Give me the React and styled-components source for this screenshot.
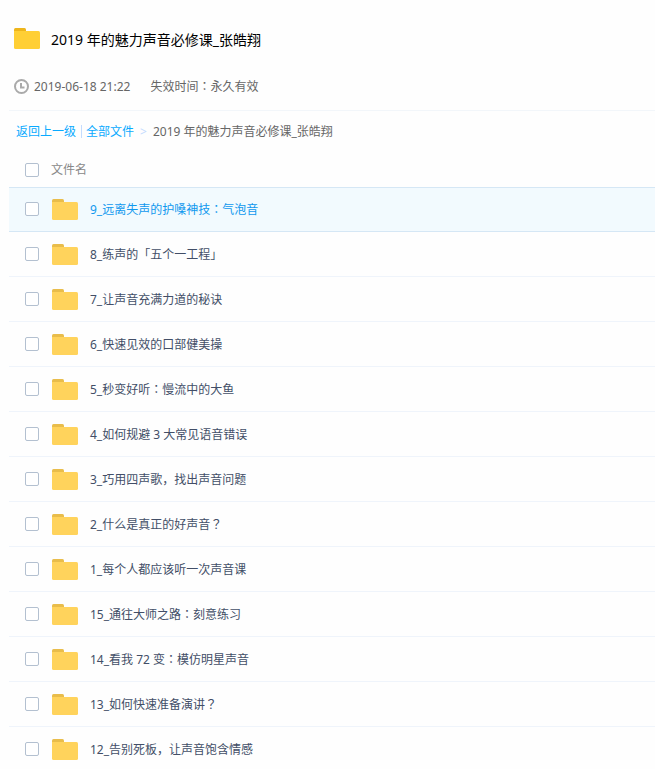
import React, { useState } from "react";
import styled, { createGlobalStyle, css } from "styled-components";

const GlobalStyle = createGlobalStyle`
  *, *::before, *::after { box-sizing: border-box; }
  body {
    margin: 0;
    background: #fefefe;
    color: #424e67;
    font: 12px/20px "Noto Sans", "Noto Sans CJK SC", sans-serif;
  }
`;

const Page = styled.main`
  padding-left: 9px;
  overflow: hidden;
`;

const Header = styled.header`
  padding: 28px 5px 14px;
  border-bottom: 1px solid #f2f6fa;
`;

const TitleRow = styled.div`
  display: flex;
  align-items: flex-start;
  gap: 11px;
  height: 21px;
`;

const Title = styled.h1`
  margin: 0;
  color: #000;
  font-size: 14px;
  line-height: 24px;
  font-weight: 400;
`;

const Meta = styled.div`
  display: flex;
  align-items: center;
  margin-top: 28px;
  line-height: 19px;
  color: #666;

  time { margin: 0 20px 0 5px; }
`;

const Breadcrumb = styled.nav`
  display: flex;
  align-items: center;
  height: 41px;
  padding-left: 7px;
  color: #666;
`;

const Crumb = styled.a`
  color: #09aaff;
  text-decoration: none;
`;

const Divider = styled.span`
  width: 1px;
  height: 13px;
  margin: 0 4px 0 5px;
  background: #c4dbfe;
`;

const Arrow = styled.span`
  margin: 0 6px;
  color: #c4dbfe;
`;

const Table = styled.table`
  width: 100%;
  border-collapse: separate;
  border-spacing: 0;
  text-align: left;
`;

const HeadCell = styled.th`
  height: 35px;
  padding: 0 0 0 16px;
  color: #888;
  font-weight: 400;
`;

const Cell = styled.td`
  height: 45px;
  padding: 0 0 0 16px;
  border-bottom: 1px solid #eff4fb;
  ${(p) => p.$active && css`
    border-bottom-color: #d5e7f5;
    background: #f2fafe;
    box-shadow: inset 0 1px 0 #d5e7f5;
  `}
`;

const Entry = styled.div`
  display: flex;
  align-items: center;
`;

const CheckBox = styled.input.attrs({ type: "checkbox" })`
  appearance: none;
  flex: none;
  width: 14px;
  height: 14px;
  margin: 0;
  border: 1px solid #b3c0d0;
  border-radius: 2px;
  background: #fff;

  &:checked {
    border-color: #09aaff;
    background: #09aaff;
    box-shadow: inset 0 0 0 2px #fff;
  }
`;

const ColumnName = styled.span`
  margin-left: 12px;
`;

const FolderSvg = styled.svg`
  flex: none;
  display: block;
`;

const FileIcon = styled.span`
  margin: 0 12px 0 13px;
`;

const FileLink = styled.a`
  padding-top: 2px;
  color: ${(p) => (p.$active ? "#1098ee" : "#424e67")};
  text-decoration: none;
`;

const CenteredMark = styled.span`
  font-family: "Noto Sans CJK JP", sans-serif;
  line-height: 1;
`;

function Folder({ tab, body }) {
  return (
    <FolderSvg width="26" height="21" viewBox="0 0 26 21" aria-hidden="true">
      <path d="M0 8V1.5Q0 0 1.5 0H10.5Q12 0 12 1.5V8Z" fill={tab} />
      <path d="M0 3H24.5Q26 3 26 4.5V19.5Q26 21 24.5 21H1.5Q0 21 0 19.5Z" fill={body} />
    </FolderSvg>
  );
}

function Clock() {
  return (
    <svg width="15" height="15" viewBox="0 0 15 15" fill="none" stroke="#aaa" strokeWidth="2" aria-hidden="true">
      <circle cx="7.5" cy="7.5" r="6.5" />
      <path d="M7 4V8.5H10.5" />
    </svg>
  );
}

function Label({ text }) {
  return text
    .split(/([：？])/)
    .map((part, i) => (i % 2 ? <CenteredMark key={i}>{part}</CenteredMark> : part));
}

const FILES = [
  "9_远离失声的护嗓神技：气泡音",
  "8_练声的「五个一工程」",
  "7_让声音充满力道的秘诀",
  "6_快速见效的口部健美操",
  "5_秒变好听：慢流中的大鱼",
  "4_如何规避 3 大常见语音错误",
  "3_巧用四声歌，找出声音问题",
  "2_什么是真正的好声音？",
  "1_每个人都应该听一次声音课",
  "15_通往大师之路：刻意练习",
  "14_看我 72 变：模仿明星声音",
  "13_如何快速准备演讲？",
  "12_告别死板，让声音饱含情感",
];

const COURSE = "2019 年的魅力声音必修课_张皓翔";

export default function App() {
  const [selected, setSelected] = useState([]);
  const toggle = (name) =>
    setSelected((list) => (list.includes(name) ? list.filter((n) => n !== name) : [...list, name]));
  const allSelected = selected.length === FILES.length;

  return (
    <Page>
      <GlobalStyle />
      <Header>
        <TitleRow>
          <Folder tab="#eeb51b" body="#ffcf35" />
          <Title>{COURSE}</Title>
        </TitleRow>
        <Meta>
          <Clock />
          <time dateTime="2019-06-18T21:22">2019-06-18 21:22</time>
          <span><Label text="失效时间：永久有效" /></span>
        </Meta>
      </Header>
      <Breadcrumb>
        <Crumb href="#up">返回上一级</Crumb>
        <Divider />
        <Crumb href="#all">全部文件</Crumb>
        <Arrow>&gt;</Arrow>
        <span>{COURSE}</span>
      </Breadcrumb>
      <Table>
        <thead>
          <tr>
            <HeadCell>
              <Entry>
                <CheckBox
                  aria-label="全选"
                  checked={allSelected}
                  onChange={() => setSelected(allSelected ? [] : FILES)}
                />
                <ColumnName>文件名</ColumnName>
              </Entry>
            </HeadCell>
          </tr>
        </thead>
        <tbody>
          {FILES.map((name, i) => (
            <tr key={name}>
              <Cell $active={i === 0}>
                <Entry>
                  <CheckBox
                    aria-label={name}
                    checked={selected.includes(name)}
                    onChange={() => toggle(name)}
                  />
                  <FileIcon><Folder tab="#e9bd4b" body="#ffd35c" /></FileIcon>
                  <FileLink href="#file" $active={i === 0}><Label text={name} /></FileLink>
                </Entry>
              </Cell>
            </tr>
          ))}
        </tbody>
      </Table>
    </Page>
  );
}
